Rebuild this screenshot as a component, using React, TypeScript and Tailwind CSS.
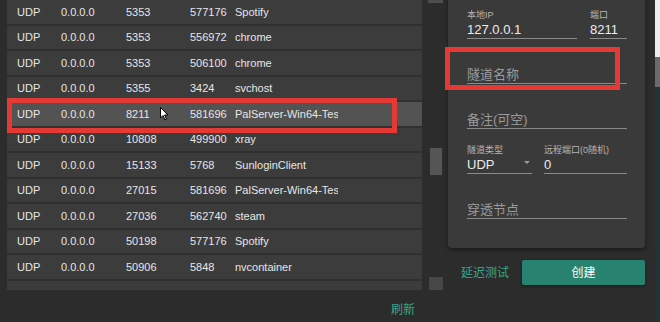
import React from "react";

const rows = [
  ["5353", "577176", "Spotify"],
  ["5353", "556972", "chrome"],
  ["5353", "506100", "chrome"],
  ["5355", "3424", "svchost"],
  ["8211", "581696", "PalServer-Win64-Test"],
  ["10808", "499900", "xray"],
  ["15133", "5768", "SunloginClient"],
  ["27015", "581696", "PalServer-Win64-Test"],
  ["27036", "562740", "steam"],
  ["50198", "577176", "Spotify"],
  ["50906", "5848", "nvcontainer"],
  ["", "", ""],
];

const font = { fontFamily: '"Liberation Sans", "Noto Sans CJK SC", sans-serif' };

function Field({
  label,
  value,
  placeholder,
  className,
  arrow,
}: {
  label?: string;
  value?: string;
  placeholder?: string;
  className?: string;
  arrow?: boolean;
}) {
  return (
    <div className={"flex flex-col " + (className ?? "")}>
      {label && <span className="text-[9px] leading-[11px] text-[#b5b5b5]">{label}</span>}
      <div className="flex items-center justify-between h-[18px] border-b border-[#8a8a8a]">
        {value ? (
          <span className="text-[13px] text-[#ececec]">{value}</span>
        ) : (
          <span className="text-[13px] text-[#9a9a9a]">{placeholder}</span>
        )}
        {arrow && <span className="mr-[2px] mb-[4px] w-0 h-0 border-l-[3px] border-r-[3px] border-t-[3px] border-l-transparent border-r-transparent border-t-[#9a9a9a]" />}
      </div>
    </div>
  );
}

export default function App() {
  return (
    <div className="relative w-[660px] h-[322px] bg-[#2c2c2c] flex overflow-hidden" style={font}>
      {/* Port table */}
      <div className="w-[448px] flex flex-col">
        <div className="flex h-[290px]">
          <div className="ml-[7px] w-[415px] bg-[#3c3c3c] overflow-hidden">
            {rows.map(([port, pid, name], i) => (
              <div
                key={i}
                className={
                  "flex items-center h-[25.5px] border-b-2 border-[#303030] pl-[10px] text-[11px] text-[#e6e6e6] " +
                  (i === 4 ? "bg-[#535353]" : "")
                }
              >
                {name && (
                  <>
                    <span className="w-[44px]">UDP</span>
                    <span className="w-[65px]">0.0.0.0</span>
                    <span className="w-[64px]">{port}</span>
                    <span className="w-[45px]">{pid}</span>
                    <span className="w-[103px] overflow-hidden whitespace-nowrap">{name}</span>
                  </>
                )}
              </div>
            ))}
          </div>
          {/* scrollbar */}
          <div className="ml-[6px] w-[15px] flex flex-col items-center">
            <div className="w-[15px] h-[3px] bg-[#4e4e4e]" />
            <div className="mt-[145px] w-[12px] h-[27px] bg-[#555555]" />
            <div className="mt-[102px] w-[14px] h-[13px] bg-[#474747]" />
          </div>
        </div>
        <div className="flex justify-end pr-[33px] pt-[11px]">
          <span className="text-[12px] text-[#3aa58b]">刷新</span>
        </div>
      </div>

      {/* Create tunnel card */}
      <div className="w-[197px] flex flex-col">
        <div className="-mt-[10px] h-[258px] bg-[#3a3a3a] rounded-[4px] shadow-[0_2px_4px_rgba(0,0,0,0.4)] pl-[19px] pr-[18px] pt-[20px] flex flex-col">
          <div className="flex gap-[13px]">
            <Field label="本地IP" value="127.0.0.1" className="w-[110px]" />
            <Field label="端口" value="8211" className="w-[37px]" />
          </div>
          <Field placeholder="隧道名称" className="mt-[27px]" />
          <Field placeholder="备注(可空)" className="mt-[27px]" />
          <div className="flex gap-[12px] mt-[16px]">
            <Field label="隧道类型" value="UDP" arrow className="w-[65px]" />
            <Field label="远程端口(0随机)" value="0" className="flex-1" />
          </div>
          <Field placeholder="穿透节点" className="mt-[27px]" />
        </div>
        <div className="flex items-center mt-[12px] pl-[13px]">
          <span className="text-[12px] text-[#3aa58b]">延迟测试</span>
          <button className="ml-[13px] w-[123px] h-[25px] bg-[#27836f] rounded-[2px] text-[12px] text-white shadow-[0_1px_3px_rgba(0,0,0,0.5)]">
            创建
          </button>
        </div>
      </div>

      {/* window edge */}
      <div className="ml-[10px] w-[5px] flex flex-col">
        <div className="h-[57px] bg-[#eeeeee]" />
        <div className="h-[30px] bg-[#6a6a6a]" />
        <div className="flex-1 bg-[#1f3434]" />
      </div>

      {/* annotations */}
      <div className="absolute left-[7px] top-[98px] w-[390px] h-[35px] border-[5px] border-[#e53935]" />
      <div className="absolute left-[445px] top-[47px] w-[175px] h-[43px] border-[5px] border-[#e53935]" />
      <svg className="absolute left-[160px] top-[107px]" width="9" height="14" viewBox="0 0 9 14">
        <path d="M0.5 0.5 L0.5 11 L3 8.5 L5 13 L6.5 12.3 L4.6 8 L8 8 Z" fill="#ffffff" stroke="#000000" strokeWidth="1" />
      </svg>
    </div>
  );
}
